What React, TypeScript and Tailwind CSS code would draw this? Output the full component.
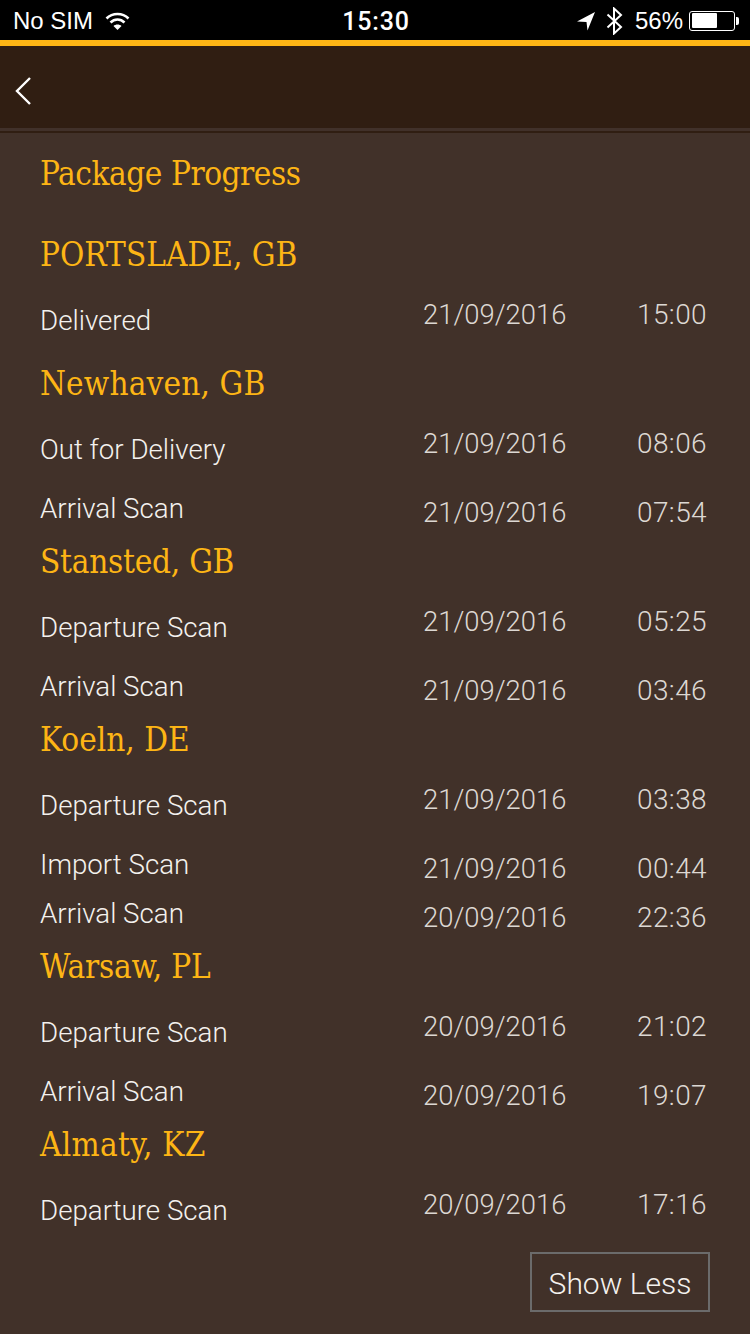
const SERIF = "font-['DejaVu_Serif_Condensed','DejaVu_Serif',serif]";

type Row = { label: string; date: string; time: string; tone?: "first" | "next" | "tight" };
type Group = { place: string; fit: string; rows: Row[]; gap: string };

const GROUPS: Group[] = [
  {
    place: "PORTSLADE, GB",
    fit: "tracking-normal",
    gap: "mb-[30px]",
    rows: [{ label: "Delivered", date: "21/09/2016", time: "15:00", tone: "first" }],
  },
  {
    place: "Newhaven, GB",
    fit: "tracking-[0.15px]",
    gap: "mb-[20px]",
    rows: [
      { label: "Out for Delivery", date: "21/09/2016", time: "08:06", tone: "first" },
      { label: "Arrival Scan", date: "21/09/2016", time: "07:54", tone: "next" },
    ],
  },
  {
    place: "Stansted, GB",
    fit: "tracking-[-0.25px]",
    gap: "mb-[20px]",
    rows: [
      { label: "Departure Scan", date: "21/09/2016", time: "05:25", tone: "first" },
      { label: "Arrival Scan", date: "21/09/2016", time: "03:46", tone: "next" },
    ],
  },
  {
    place: "Koeln, DE",
    fit: "tracking-normal",
    gap: "mb-[20px]",
    rows: [
      { label: "Departure Scan", date: "21/09/2016", time: "03:38", tone: "first" },
      { label: "Import Scan", date: "21/09/2016", time: "00:44", tone: "tight" },
      { label: "Arrival Scan", date: "20/09/2016", time: "22:36", tone: "next" },
    ],
  },
  {
    place: "Warsaw, PL",
    fit: "tracking-[-0.2px]",
    gap: "mb-[20px]",
    rows: [
      { label: "Departure Scan", date: "20/09/2016", time: "21:02", tone: "first" },
      { label: "Arrival Scan", date: "20/09/2016", time: "19:07", tone: "next" },
    ],
  },
  {
    place: "Almaty, KZ",
    fit: "tracking-[0.3px]",
    gap: "mb-[29px]",
    rows: [{ label: "Departure Scan", date: "20/09/2016", time: "17:16", tone: "first" }],
  },
];

function StatusBar() {
  return (
    <div className="flex h-[40px] items-center bg-black pl-[13px] pr-[11px] pt-[1px] font-['Liberation_Sans',sans-serif] text-[24px] text-white">
      <span>No SIM</span>
      <svg className="ml-[12px]" width="25" height="20" viewBox="0 0 25 20" fill="none" stroke="white" strokeWidth="2.6">
        <path d="M1.5 7.5C7.5 1.5 17.5 1.5 23.5 7.5" />
        <path d="M5.5 11.5C9.5 7.5 15.5 7.5 19.5 11.5" />
        <path d="M12.5 19L8.5 15C10.5 13 14.5 13 16.5 15Z" fill="white" stroke="none" />
      </svg>
      <span className="absolute left-[2px] right-0 mt-[2px] text-center font-['Roboto',sans-serif] text-[25px] font-medium tracking-[0.8px]">15:30</span>
      <div className="ml-auto flex items-center">
        <svg width="20" height="20" viewBox="0 0 20 20" fill="white">
          <path d="M19 1L1 10.5L10.5 11L11.5 19.5Z" />
        </svg>
        <svg className="ml-[10px]" width="17" height="28" viewBox="0 0 17 28" fill="none" stroke="white" strokeWidth="2">
          <path d="M1.5 7.5L15 20L8 26.5V1.5L15 8L1.5 20.5" />
        </svg>
        <span className="ml-[12px]">56%</span>
        <div className="ml-[6px] flex items-center">
          <div className="flex h-[20px] w-[46px] rounded-[3px] border border-white p-[1.5px]">
            <div className="h-full w-[25px] rounded-[1px] bg-white" />
          </div>
          <div className="ml-[1px] h-[8px] w-[3px] rounded-r-[2px] bg-white" />
        </div>
      </div>
    </div>
  );
}

function EventRow({ label, date, time, tone }: Row) {
  const height = tone === "tight" ? "h-[49px]" : "h-[59px]";
  const offset = tone === "first" ? "pt-[25px]" : "pt-[35px]";
  return (
    <div className={`flex ${height} items-start leading-[32px]`}>
      <div className="flex-1 pt-[31px] text-[27.7px] text-[#f4f1ee]">{label}</div>
      <div className={`w-[143px] whitespace-nowrap text-[27.4px] text-[#ddd8d3] ${offset}`}>{date}</div>
      <div className={`w-[141px] whitespace-nowrap text-right text-[28px] tracking-[0.4px] text-[#ddd8d3] ${offset}`}>{time}</div>
    </div>
  );
}

export default function App() {
  return (
    <div className="relative flex h-[1334px] w-[750px] flex-col overflow-hidden bg-[#413129] font-['Roboto',sans-serif] font-light">
      <StatusBar />
      <div className="h-[6px] bg-[#fdb515]" />
      <div className="flex h-[82px] items-center bg-[#301e12] pl-[15px] pt-[8px]">
        <svg width="16" height="28" viewBox="0 0 16 28" fill="none" stroke="white" strokeWidth="2.4">
          <path d="M15 1L2 14L15 27" />
        </svg>
      </div>
      <div className="h-[3px] bg-[#41312a]" />
      <div className="h-[2px] bg-[#301e12]" />

      <div className="flex flex-1 flex-col pl-[40px] pr-[43px] pt-[20px]">
        <h1 className={`mb-[41px] h-[40px] pt-[1px] text-[33px] leading-[40px] font-normal tracking-[-0.45px] text-[#fdb515] ${SERIF}`}>Package Progress</h1>

        {GROUPS.map((group) => (
          <div key={group.place} className={group.gap}>
            <h2 className={`h-[40px] pt-[1px] text-[33px] leading-[40px] font-normal text-[#fdb515] ${group.fit} ${SERIF}`}>{group.place}</h2>
            {group.rows.map((row) => (
              <EventRow key={row.time} {...row} />
            ))}
          </div>
        ))}

        <div className="flex justify-end">
          <button className="-mr-[3px] flex h-[60px] w-[180px] items-center justify-center border-2 border-[#6b6b6b] pt-[2px] text-[30px] text-[#f4f1ee]">
            Show Less
          </button>
        </div>
      </div>
    </div>
  );
}
